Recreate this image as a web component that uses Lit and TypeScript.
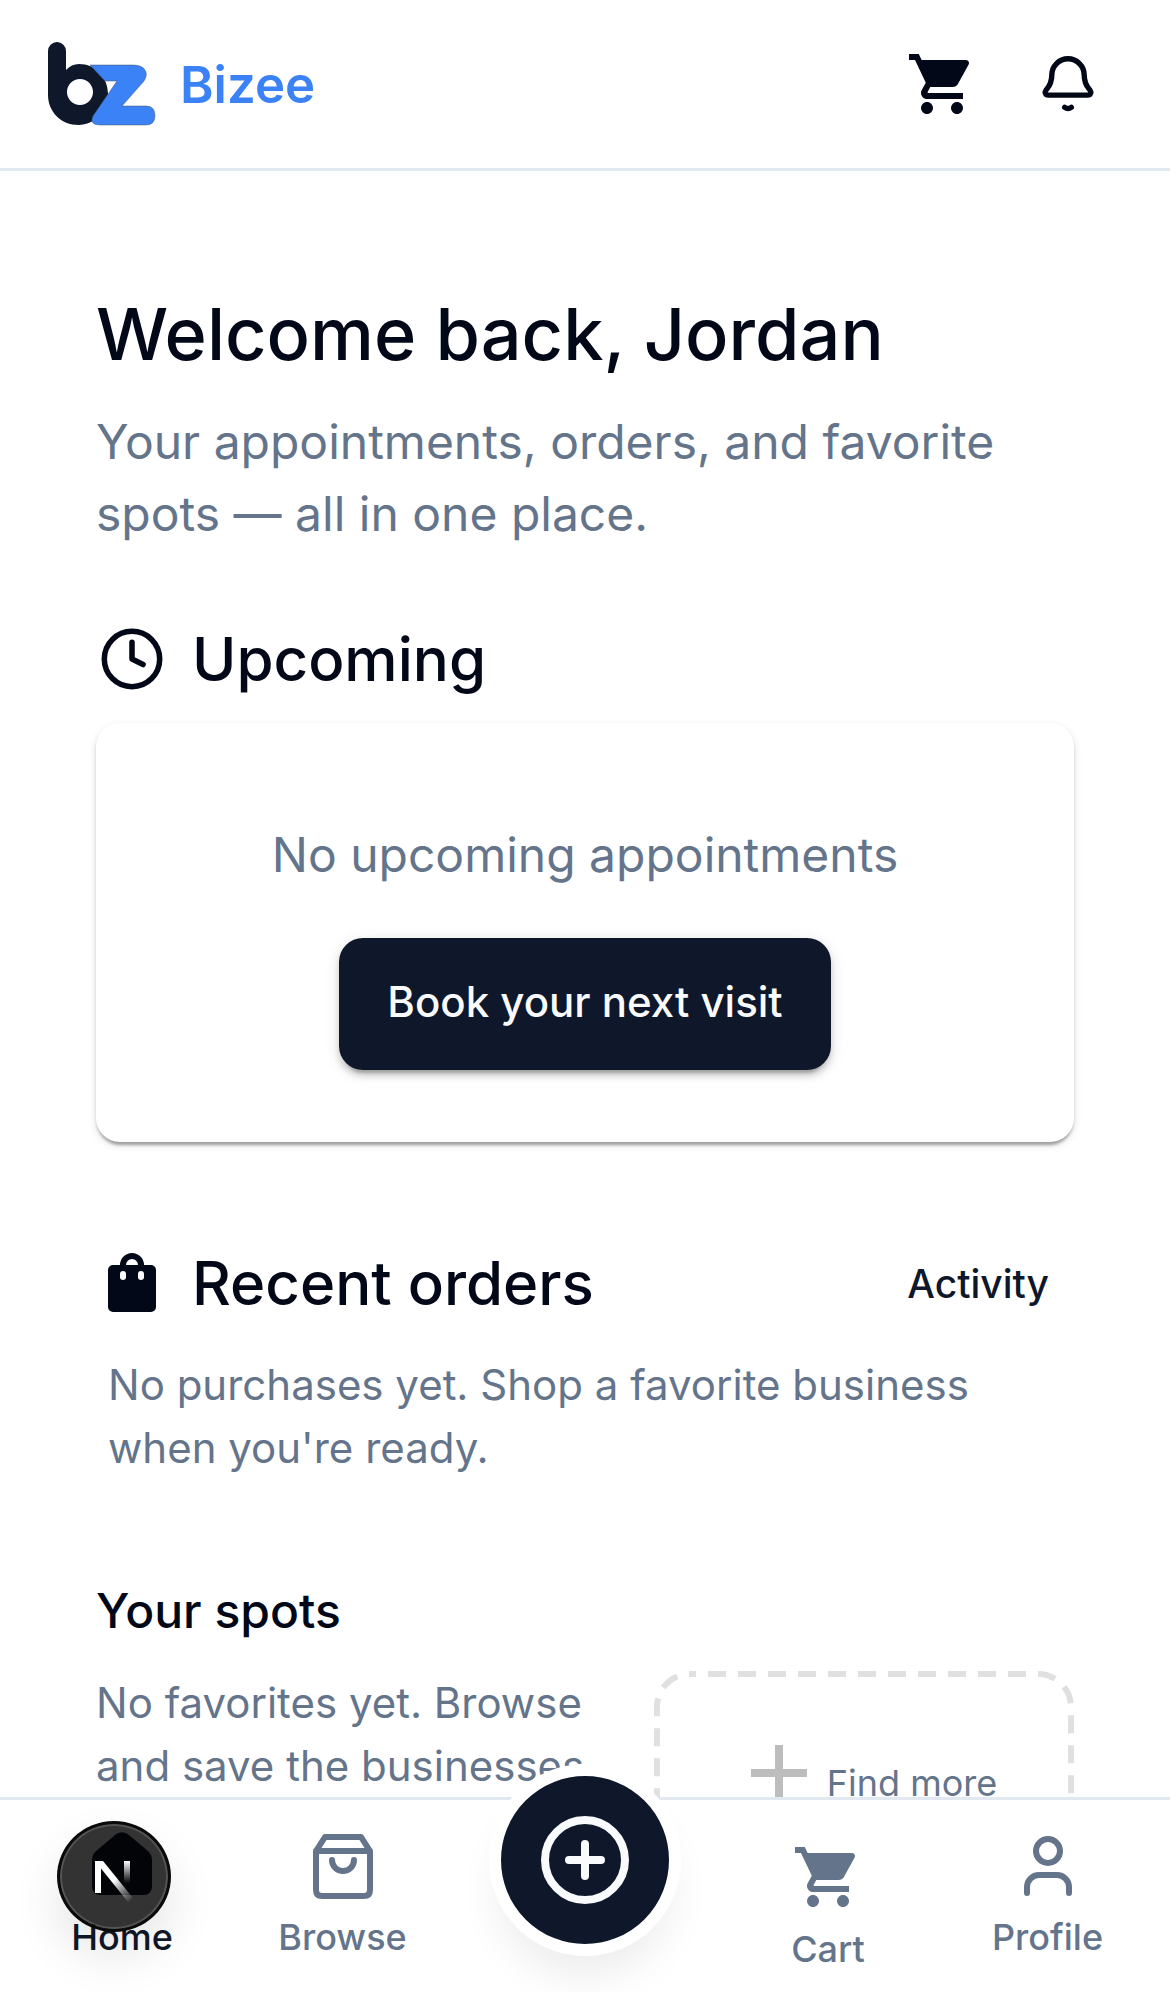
import { LitElement, html, css, svg } from 'lit';
import { customElement } from 'lit/decorators.js';

const CART_PATH =
  'M7 18c-1.1 0-1.99.9-1.99 2S5.9 22 7 22s2-.9 2-2-.9-2-2-2zM1 2v2h2l3.6 7.59-1.35 2.45c-.16.28-.25.61-.25.96 0 1.1.9 2 2 2h12v-2H7.42c-.14 0-.25-.11-.25-.25l.03-.12.9-1.63h7.45c.75 0 1.41-.41 1.75-1.03l3.58-6.49c.08-.14.12-.31.12-.48 0-.55-.45-1-1-1H5.21l-.94-2H1zm16 16c-1.1 0-1.99.9-1.99 2s.89 2 1.99 2 2-.9 2-2-.9-2-2-2z';

const cartIcon = svg`<svg class="icon" viewBox="0 0 24 24" fill="currentColor"><path d=${CART_PATH}></path></svg>`;

const logo = svg`<svg class="logo" viewBox="0 0 110 84" aria-label="Bizee logo">
  <g transform="translate(-48 -42)">
    <path fill="#0f172a" fill-rule="evenodd"
      d="M57 42a9 9 0 0 1 9 9V70c3.600-3.800 8-6 13-6 16.300 0 29 13.400 29 30s-13.200 31-29.500 31C61 125 48 111.700 48 95V51A9 9 0 0 1 57 42ZM80 79c-7.200 0-13 5.800-13 13s5.800 13 13 13 13-5.800 13-13-5.800-13-13-13Z"></path>
    <path fill="#3b82f6" stroke="#475569" stroke-width=".5"
      d="M90 65H133Q142 65 145 70Q148 75 144 81L122 106H146Q155 106 155 115.500Q155 125 146 125H100Q89 125 93 116L117 81H105Z"></path>
  </g>
</svg>`;

@customElement('app-root')
export class AppRoot extends LitElement {
  static styles = css`
    :host {
      display: block;
      font-family: Inter, "Liberation Sans", sans-serif;
      color: #020817;
      background: #fff;
    }

    .icon {
      display: block;
      width: 72px;
      height: 72px;
      flex-shrink: 0;
    }

    /* Top bar */
    .topbar {
      display: flex;
      align-items: center;
      height: 168px;
      padding: 0 66px 0 48px;
      border-bottom: 3px solid #e2e8f0;
    }
    .logo {
      width: 110px;
      height: 84px;
      margin-right: 22px;
    }
    .brand {
      font-size: 51px;
      font-weight: 600;
      color: #3b82f6;
      flex: 1;
    }
    .top-actions {
      display: flex;
      gap: 54px;
    }

    /* Content */
    main {
      padding: 109px 96px 24px;
    }
    h1 {
      margin: 0 0 18px;
      font-size: 72px;
      line-height: 108px;
      font-weight: 500;
    }
    .lead {
      margin: 0;
      font-size: 48px;
      line-height: 72px;
      color: #64748b;
    }
    .section-head {
      display: flex;
      align-items: center;
      gap: 24px;
      height: 72px;
    }
    .section-head h2 {
      margin: 0;
      flex: 1;
      font-size: 60px;
      font-weight: 500;
    }
    .upcoming {
      margin-top: 73px;
    }
    .card {
      margin-top: 28px;
      padding: 96px 48px 72px;
      border-radius: 24px;
      text-align: center;
      box-shadow: 0 6px 3px -3px rgba(0, 0, 0, 0.2), 0 3px 3px 0 rgba(0, 0, 0, 0.14),
        0 3px 9px 0 rgba(0, 0, 0, 0.12);
    }
    .card p {
      margin: 0 0 47px;
      font-size: 48px;
      line-height: 72px;
      color: #64748b;
    }
    .primary {
      height: 132px;
      padding: 0 48px 6px;
      border: none;
      border-radius: 24px;
      background: #0f172a;
      color: #f8fafc;
      font: 500 42px Inter, sans-serif;
      box-shadow: 0 9px 3px -6px rgba(0, 0, 0, 0.2), 0 6px 6px 0 rgba(0, 0, 0, 0.14),
        0 3px 15px 0 rgba(0, 0, 0, 0.12);
    }
    .orders {
      margin-top: 105px;
    }
    .activity {
      margin-right: 12px;
      padding: 0 13px;
      border: none;
      background: none;
      color: #0f172a;
      font: 500 39px Inter, sans-serif;
    }
    .note {
      margin: 0;
      font-size: 42px;
      line-height: 63px;
      color: #64748b;
    }
    .orders .note {
      margin-top: 34px;
      padding: 0 12px;
    }
    .spots {
      margin-top: 96px;
    }
    .spots h3 {
      margin: 0 0 24px;
      font-size: 48px;
      line-height: 72px;
      font-weight: 500;
    }
    .spots-grid {
      display: grid;
      grid-template-columns: 1fr 420px;
      gap: 24px;
    }
    .find-more {
      position: relative;
      display: flex;
      justify-content: center;
      align-items: flex-start;
      height: 230px;
      padding-top: 54px;
      box-sizing: border-box;
      color: #64748b;
    }
    .find-more .dashes {
      position: absolute;
      inset: 0;
      fill: none;
      stroke: #e0e0e0;
      stroke-width: 6;
      stroke-dasharray: 18 12;
      stroke-dashoffset: 12;
    }
    .find-more .plus {
      display: block;
      width: 96px;
      height: 96px;
      fill: #bdbdbd;
    }
    .find-more span {
      margin-top: 29px;
      font-size: 36px;
      line-height: 58px;
    }

    /* Bottom navigation */
    nav {
      position: fixed;
      left: 0;
      right: 0;
      bottom: 0;
      display: grid;
      grid-template-columns: 244px 197px 290px 194px 245px;
      height: 195px;
      box-sizing: border-box;
      padding-top: 30px;
      background: #fff;
      border-top: 3px solid #e2e8f0;
    }
    .tab {
      display: flex;
      flex-direction: column;
      align-items: center;
      gap: 8px;
      color: #64748b;
      font-size: 36px;
      line-height: 54px;
      font-weight: 500;
    }
    .tab.active {
      color: #0f172a;
    }
    .tab.cart {
      margin-top: 11px;
      gap: 9px;
    }
    .tab svg.line {
      fill: none;
      stroke: currentColor;
      stroke-width: 6;
      stroke-linecap: round;
      stroke-linejoin: round;
    }
    .fab {
      position: absolute;
      left: 489px;
      top: -36px;
      display: flex;
      align-items: center;
      justify-content: center;
      width: 192px;
      height: 192px;
      box-sizing: border-box;
      border: 12px solid #fff;
      border-radius: 50%;
      background: #0f172a;
      color: #f8fafc;
      box-shadow: 0 30px 40px -8px rgba(0, 0, 0, 0.07);
    }
    .fab svg {
      width: 96px;
      height: 96px;
      fill: none;
      stroke: currentColor;
      stroke-width: 2;
      stroke-linecap: round;
    }

    /* Dev badge floating over the nav */
    .dev-badge {
      position: fixed;
      left: 57px;
      bottom: 60px;
      width: 114px;
      height: 111px;
      box-sizing: border-box;
      border: 3px solid #0a0a0a;
      border-radius: 50%;
      background: rgba(0, 0, 0, 0.8);
      box-shadow: inset 0 0 0 2px rgba(255, 255, 255, 0.16), 0 24px 48px rgba(0, 0, 0, 0.1);
    }
    .dev-badge svg {
      position: absolute;
      inset: -3px;
      width: 114px;
      height: 111px;
    }
  `;

  render() {
    return html`
      <header class="topbar">
        ${logo}
        <span class="brand">Bizee</span>
        <div class="top-actions">
          ${cartIcon}
          <svg class="icon" viewBox="0 0 24 24" fill="none" stroke="currentColor" stroke-width="1.800" stroke-linecap="round" stroke-linejoin="round">
            <path d="M6.600 9a5.400 5.400 0 0 1 10.800 0c0 3 1.100 4 1.900 5 .6.800.2 1.700-.7 1.700H5.400c-.9 0-1.300-.9-.7-1.700.8-1 1.900-2 1.900-5Z"></path>
            <path d="M10.900 19.800q1.100.8 2.200 0"></path>
          </svg>
        </div>
      </header>

      <main>
        <h1>Welcome back, Jordan</h1>
        <p class="lead">Your appointments, orders, and favorite spots — all in one place.</p>

        <section class="upcoming">
          <div class="section-head">
            <svg class="icon" viewBox="-1 -1 26 26" fill="none" stroke="currentColor" stroke-width="2" stroke-linecap="round" stroke-linejoin="round">
              <circle cx="12" cy="12" r="10"></circle>
              <path d="M12 6v6l4 2"></path>
            </svg>
            <h2>Upcoming</h2>
          </div>
          <div class="card">
            <p>No upcoming appointments</p>
            <button class="primary">Book your next visit</button>
          </div>
        </section>

        <section class="orders">
          <div class="section-head">
            <svg class="icon" viewBox="-12 -6 72 72">
              <path fill="currentColor" fill-rule="evenodd" d="M5 12H43a5 5 0 0 1 5 5V54a5 5 0 0 1-5 5H5a5 5 0 0 1-5-5V17a5 5 0 0 1 5-5ZM15 18a3 3 0 0 0-3 3v3a3 3 0 0 0 6 0v-3a3 3 0 0 0-3-3ZM33 18a3 3 0 0 0-3 3v3a3 3 0 0 0 6 0v-3a3 3 0 0 0-3-3Z"></path>
              <path fill="none" stroke="currentColor" stroke-width="6" d="M15 14V12a9 9 0 0 1 18 0v2"></path>
            </svg>
            <h2>Recent orders</h2>
            <button class="activity">Activity</button>
          </div>
          <p class="note">No purchases yet. Shop a favorite business when you're ready.</p>
        </section>

        <section class="spots">
          <h3>Your spots</h3>
          <div class="spots-grid">
            <p class="note">No favorites yet. Browse and save the businesses you love.</p>
            <div class="find-more">
              <svg class="dashes" width="420" height="230" viewBox="0 0 420 230">
                <rect x="3" y="3" width="414" height="224" rx="33"></rect>
              </svg>
              <svg class="plus" viewBox="0 0 24 24"><path d="M19 13h-6v6h-2v-6H5v-2h6V5h2v6h6v2z"></path></svg>
              <span>Find more</span>
            </div>
          </div>
        </section>
      </main>

      <nav>
        <div class="tab active">
          <svg class="icon" viewBox="0 0 72 72" fill="currentColor">
            <path d="M29 5a10 10 0 0 1 14 0L63 22Q66 25 66 29V57a8 8 0 0 1-8 8H14a8 8 0 0 1-8-8V29Q6 25 9 22Z"></path>
          </svg>
          Home
        </div>
        <div class="tab">
          <svg class="icon line" viewBox="0 0 72 72">
            <path d="M18 7H54L63 21V60Q63 66 57 66H15Q9 66 9 60V21ZM9 21H63"></path>
            <path d="M25 30a11 11 0 0 0 22 0"></path>
          </svg>
          Browse
        </div>
        <div></div>
        <div class="tab cart">${cartIcon} Cart</div>
        <div class="tab">
          <svg class="icon line" viewBox="0 0 72 72">
            <circle cx="36" cy="21" r="12"></circle>
            <path d="M15 63v-6a12 12 0 0 1 12-12h18a12 12 0 0 1 12 12v6"></path>
          </svg>
          Profile
        </div>
        <div class="fab">
          <svg viewBox="0 0 24 24">
            <circle cx="12" cy="12" r="10"></circle>
            <path d="M8 12h8M12 8v8"></path>
          </svg>
        </div>
      </nav>

      <div class="dev-badge">
        <svg viewBox="0 0 114 111">
          <defs>
            <linearGradient id="fade-stem" x1="0" y1="0" x2="0" y2="1">
              <stop offset="0" stop-color="#fff"></stop>
              <stop offset="1" stop-color="#fff" stop-opacity="0"></stop>
            </linearGradient>
            <linearGradient id="fade-diag" gradientUnits="userSpaceOnUse" x1="56" y1="60" x2="75" y2="80">
              <stop offset="0" stop-color="#fff"></stop>
              <stop offset="1" stop-color="#fff" stop-opacity="0"></stop>
            </linearGradient>
          </defs>
          <rect x="38" y="40" width="6" height="32" fill="#fff"></rect>
          <rect x="67" y="40" width="6" height="22" fill="url(#fade-stem)"></rect>
          <polygon points="38,40 46,40 76,77 71,81" fill="url(#fade-diag)"></polygon>
        </svg>
      </div>
    `;
  }
}
